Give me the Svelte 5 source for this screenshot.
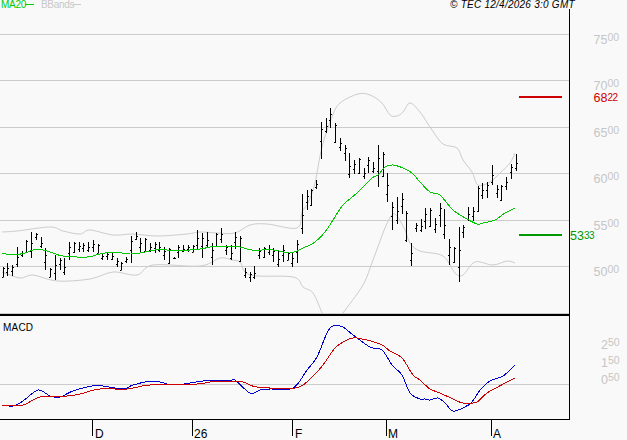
<script>
  const bars = [
    [267,277],[263,276],[265,276],[247,267],[251,257],[240,253],[232,258],[233,240],[237,248],[248,270],
    [268,277],[255,280],[258,270],[258,275],[242,260],[242,253],[242,252],[243,252],[242,252],[240,252],
    [244,253],[253,260],[252,260],[252,260],[258,267],[262,270],[257,263],[236,263],[232,240],[238,253],
    [238,252],[243,252],[242,253],[242,252],[247,260],[248,264],[257,259],[245,258],[245,252],[245,252],
    [245,252],[230,250],[233,258],[232,247],[243,265],[233,247],[228,243],[245,255],[245,260],[232,249],
    [236,262],[268,278],[272,282],[266,279],[248,259],[247,258],[245,255],[248,262],[250,267],[245,262],
    [252,260],[252,267],[240,263],[194,234],[190,210],[189,206],[180,189],[122,159],[118,133],[108,128],
    [123,143],[138,151],[145,161],[153,178],[160,174],[158,174],[168,179],[157,173],[162,173],[145,187],
    [152,177],[173,202],[202,230],[197,224],[193,214],[211,242],[243,266],[223,232],[219,232],[208,229],
    [208,227],[218,233],[203,227],[209,239],[239,265],[247,263],[227,282],[225,238],[207,221],[207,221],
    [186,212],[183,199],[182,198],[165,185],[185,198],[185,201],[177,190],[164,179],[154,171]
  ];
  const barX = (i) => Math.round(2.6 + 4.75 * i) + 0.5;
  const openY = (b, i) => Math.round(b[1] - (b[1] - b[0]) * (((i * 7) % 5) / 9 + 0.05));
  const closeY = (b, i) => Math.round(b[0] + (b[1] - b[0]) * (((i * 3) % 5) / 9 + 0.08));

  function smooth(str) {
    const p = str.split(" ").map((s) => s.split(",").map(Number));
    let d = `M${p[0][0]},${p[0][1]}`;
    for (let i = 0; i < p.length - 1; i++) {
      const a = p[Math.max(i - 1, 0)], b = p[i], c = p[i + 1], e = p[Math.min(i + 2, p.length - 1)];
      const c1 = [b[0] + (c[0] - a[0]) / 6, b[1] + (c[1] - a[1]) / 6];
      const c2 = [c[0] - (e[0] - b[0]) / 6, c[1] - (e[1] - b[1]) / 6];
      d += `C${c1[0].toFixed(1)},${c1[1].toFixed(1)} ${c2[0].toFixed(1)},${c2[1].toFixed(1)} ${c[0]},${c[1]}`;
    }
    return d;
  }

  const ma = smooth("2,253 13,255 25,253 33,250 43,250 53,253 63,256 87,257 100,254 113,252 130,254 140,253 150,251 163,249 173,251 200,249 210,247 223,246 240,247 252,250 273,250 290,253 303,248 315,242 325,232 333,220 343,205 357,193 372,178 378,175 385,167 393,165 403,168 412,173 420,182 430,192 440,195 453,210 467,219 477,224 483,223 495,220 505,213 515,208");
  const upper = smooth("2,232 17,231 50,227 63,231 80,234 90,230 113,235 133,234 157,236 187,234 200,232 217,233 235,233 250,225 267,224 297,228 302,212 308,203 315,183 322,147 332,117 340,103 358,94 370,95 382,103 390,115 397,116 403,112 410,103 420,112 432,130 443,144 457,148 463,160 472,172 478,185 490,182 500,173 510,163 515,153");
  const lower = smooth("2,272 20,278 33,275 57,281 90,279 113,272 137,275 153,265 200,266 220,258 232,260 240,262 250,275 293,277 303,287 313,293 322,313") + smooth("343,313 363,285 373,260 385,228 392,215 397,216 405,230 410,243 420,251 443,256 455,273 463,275 475,262 493,265 507,261 515,263");
  const blue = smooth("2,405 13,406 23,401 38,390 50,396 60,397 73,391 92,386 103,386 123,389 133,385 153,381 173,385 190,383 203,381 217,380 230,381 235,380 250,393 260,390 270,389 293,388 307,370 317,357 327,333 333,326 343,327 353,335 370,347 382,350 392,365 402,375 410,393 420,399 425,399 430,400 438,398 445,403 453,411 463,408 472,402 480,390 490,381 503,376 515,365");
  const red = smooth("2,405 23,405 40,397 67,396 80,394 100,389 127,389 150,385 197,384 210,382 230,381 243,382 257,387 295,388 310,379 323,365 335,348 347,340 357,338 380,344 390,351 402,358 413,375 420,380 430,389 440,393 453,399 463,403 477,402 487,393 515,378");
  const grid = [34, 80, 127, 173, 220, 266];
  const priceLabels = [["75", "00", 44], ["70", "00", 90], ["65", "00", 137], ["60", "00", 183], ["55", "00", 230], ["50", "00", 276]];
  const macdLabels = [["2", "50", 349], ["1", "50", 367], ["0", "50", 384]];
  const ticks = [[92, "D", 95], [192, "26", 194], [292, "F", 295], [386, "M", 388], [491, "A", 493]];
</script>

<div class="chart">
  <svg width="627" height="440" viewBox="0 0 627 440">
    <g class="grid">
      {#each grid as y}
        <line x1="0" x2="569" y1={y + 0.5} y2={y + 0.5} />
      {/each}
      <line x1="0" x2="569" y1="313.5" y2="313.5" />
      <line x1="0" x2="569" y1="384.5" y2="384.5" />
    </g>

    <path class="bb" d={upper} />
    <path class="bb" d={lower} />

    <g class="bars">
      {#each bars as b, i}
        <line x1={barX(i)} x2={barX(i)} y1={b[0]} y2={b[1]} />
        <line x1={barX(i) - 1.5} x2={barX(i)} y1={openY(b, i) + 0.5} y2={openY(b, i) + 0.5} />
        <line x1={barX(i)} x2={barX(i) + 1.5} y1={closeY(b, i) + 0.5} y2={closeY(b, i) + 0.5} />
      {/each}
    </g>

    <path class="ma" d={ma} />
    <path class="blue" d={blue} />
    <path class="red" d={red} />

    <g class="frame">
      <line x1="569.5" x2="569.5" y1="9" y2="420" />
      <line class="thick" x1="0" x2="570" y1="315" y2="315" />
      <line x1="0" x2="570" y1="419.5" y2="419.5" />
      {#each ticks as t}
        <line x1={t[0] + 0.5} x2={t[0] + 0.5} y1="419" y2="436" />
      {/each}
    </g>

    <rect class="level-red" x="519" y="96" width="43" height="2" />
    <rect class="level-green" x="519" y="234" width="43" height="2" />
    <rect class="legend-green" x="25" y="4" width="9" height="1" />
    <rect class="legend-gray" x="73" y="4" width="8" height="1" />

    <text class="legend green-text" x="1" y="8">MA20</text>
    <text class="legend gray-text" x="41" y="8">BBands</text>
    <text class="stamp" x="450" y="8">© TEC 12/4/2026 3:0 GMT</text>
    <text class="macd-title" x="3" y="331">MACD</text>

    {#each priceLabels as p}
      <text class="axis" x="593.5" y={p[2]}>{p[0]}<tspan class="minor" dy="-3">{p[1]}</tspan></text>
    {/each}
    {#each macdLabels as p}
      <text class="axis" x="601" y={p[2]}>{p[0]}<tspan class="minor" dy="-3">{p[1]}</tspan></text>
    {/each}

    <text class="value red-text" x="593.5" y="102">68<tspan class="minor-value" dy="-1">22</tspan></text>
    <text class="value green-value" x="570" y="240">53<tspan class="minor-value" dy="-1">33</tspan></text>

    {#each ticks as t}
      <text class="date" x={t[2]} y="438">{t[1]}</text>
    {/each}
  </svg>
</div>

<style>
  :global(body) {
    margin: 0;
    background: #f9f9f9;
  }
  .chart {
    width: 627px;
    height: 440px;
    background: #f9f9f9;
    overflow: hidden;
  }
  svg {
    display: block;
    font-family: "Liberation Sans", Arial, sans-serif;
  }
  .grid line {
    stroke: #cccccc;
    stroke-width: 1;
  }
  .bb {
    fill: none;
    stroke: #cccccc;
    stroke-width: 1;
  }
  .bars line {
    stroke: #000000;
    stroke-width: 1;
  }
  .ma {
    fill: none;
    stroke: #00c800;
    stroke-width: 1;
    shape-rendering: crispEdges;
  }
  .blue {
    fill: none;
    stroke: #0000cc;
    stroke-width: 1;
    shape-rendering: crispEdges;
  }
  .red {
    fill: none;
    stroke: #cc0000;
    stroke-width: 1;
    shape-rendering: crispEdges;
  }
  .frame line {
    stroke: #000000;
    stroke-width: 1;
  }
  .frame .thick {
    stroke-width: 2;
  }
  .level-red {
    fill: #cc0000;
  }
  .level-green {
    fill: #009900;
  }
  .legend-green {
    fill: #00cc00;
  }
  .legend-gray {
    fill: #cccccc;
  }
  .legend {
    font-size: 10px;
    letter-spacing: -0.3px;
  }
  .green-text {
    fill: #00cc00;
  }
  .gray-text {
    fill: #c8c8c8;
  }
  .stamp {
    font-size: 10px;
    font-style: italic;
    fill: #000000;
    letter-spacing: 0.25px;
  }
  .macd-title {
    font-size: 10px;
    fill: #000000;
    letter-spacing: 0.2px;
  }
  .axis {
    font-size: 12.5px;
    fill: #c6c6c6;
  }
  .value {
    font-size: 12.5px;
  }
  .minor {
    font-size: 10.5px;
  }
  .minor-value {
    font-size: 10px;
    letter-spacing: -0.4px;
  }
  .red-text {
    fill: #cc0000;
  }
  .green-value {
    fill: #009900;
  }
  .date {
    font-size: 12px;
    fill: #000000;
  }
</style>
